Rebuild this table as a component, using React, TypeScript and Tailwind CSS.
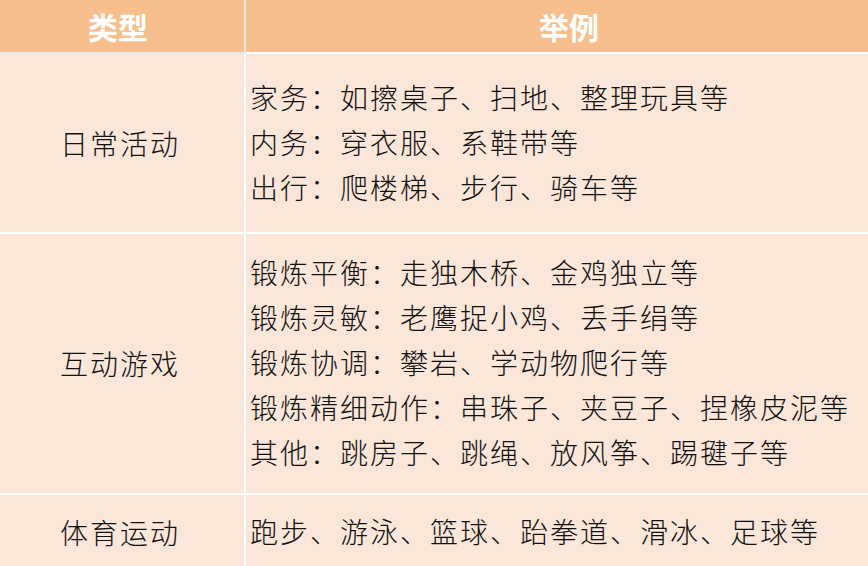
const rows: { type: string; items: string[]; h: string }[] = [
  {
    type: '日常活动',
    items: ['家务：如擦桌子、扫地、整理玩具等', '内务：穿衣服、系鞋带等', '出行：爬楼梯、步行、骑车等'],
    h: 'h-[178px]',
  },
  {
    type: '互动游戏',
    items: [
      '锻炼平衡：走独木桥、金鸡独立等',
      '锻炼灵敏：老鹰捉小鸡、丢手绢等',
      '锻炼协调：攀岩、学动物爬行等',
      '锻炼精细动作：串珠子、夹豆子、捏橡皮泥等',
      '其他：跳房子、跳绳、放风筝、踢毽子等',
    ],
    h: 'h-[259px]',
  },
  {
    type: '体育运动',
    items: ['跑步、游泳、篮球、跆拳道、滑冰、足球等'],
    h: 'h-[74px]',
  },
];

export default function App() {
  return (
    <div
      className="w-[868px] h-[566px] overflow-hidden bg-white text-[28px] tracking-[2px] leading-[45px] text-[#111]"
      style={{ fontFamily: '"Noto Sans CJK SC", "Noto Sans", sans-serif' }}
    >
      {/* Header */}
      <div className="flex gap-[2px] bg-[#e8e6f0] text-[30px] tracking-normal">
        <div className="w-[244px] h-[52px] bg-[#f8bf8e] flex items-center justify-center pr-[8px] font-bold text-white">
          类型
        </div>
        <div className="flex-1 h-[52px] bg-[#f8bf8e] flex items-center justify-center pl-[24px] font-bold text-white">
          举例
        </div>
      </div>
      <div className="flex h-[2px]">
        <div className="w-[246px] bg-[#e8e6f0]" />
        <div className="flex-1 bg-white" />
      </div>

      {/* Body */}
      <div className="grid grid-cols-[244px_1fr] gap-[2px] bg-white">
        {rows.map((r) => (
          <div key={r.type} className="contents">
            <div className={`${r.h} bg-[#fbe7da] flex items-center justify-center pr-[4px] font-light`}>{r.type}</div>
            <div className={`${r.h} bg-[#fbe7da] flex flex-col justify-center pl-[4px] pb-[2px] font-light`}>
              {r.items.map((t) => (
                <div key={t}>{t}</div>
              ))}
            </div>
          </div>
        ))}
      </div>
    </div>
  );
}
